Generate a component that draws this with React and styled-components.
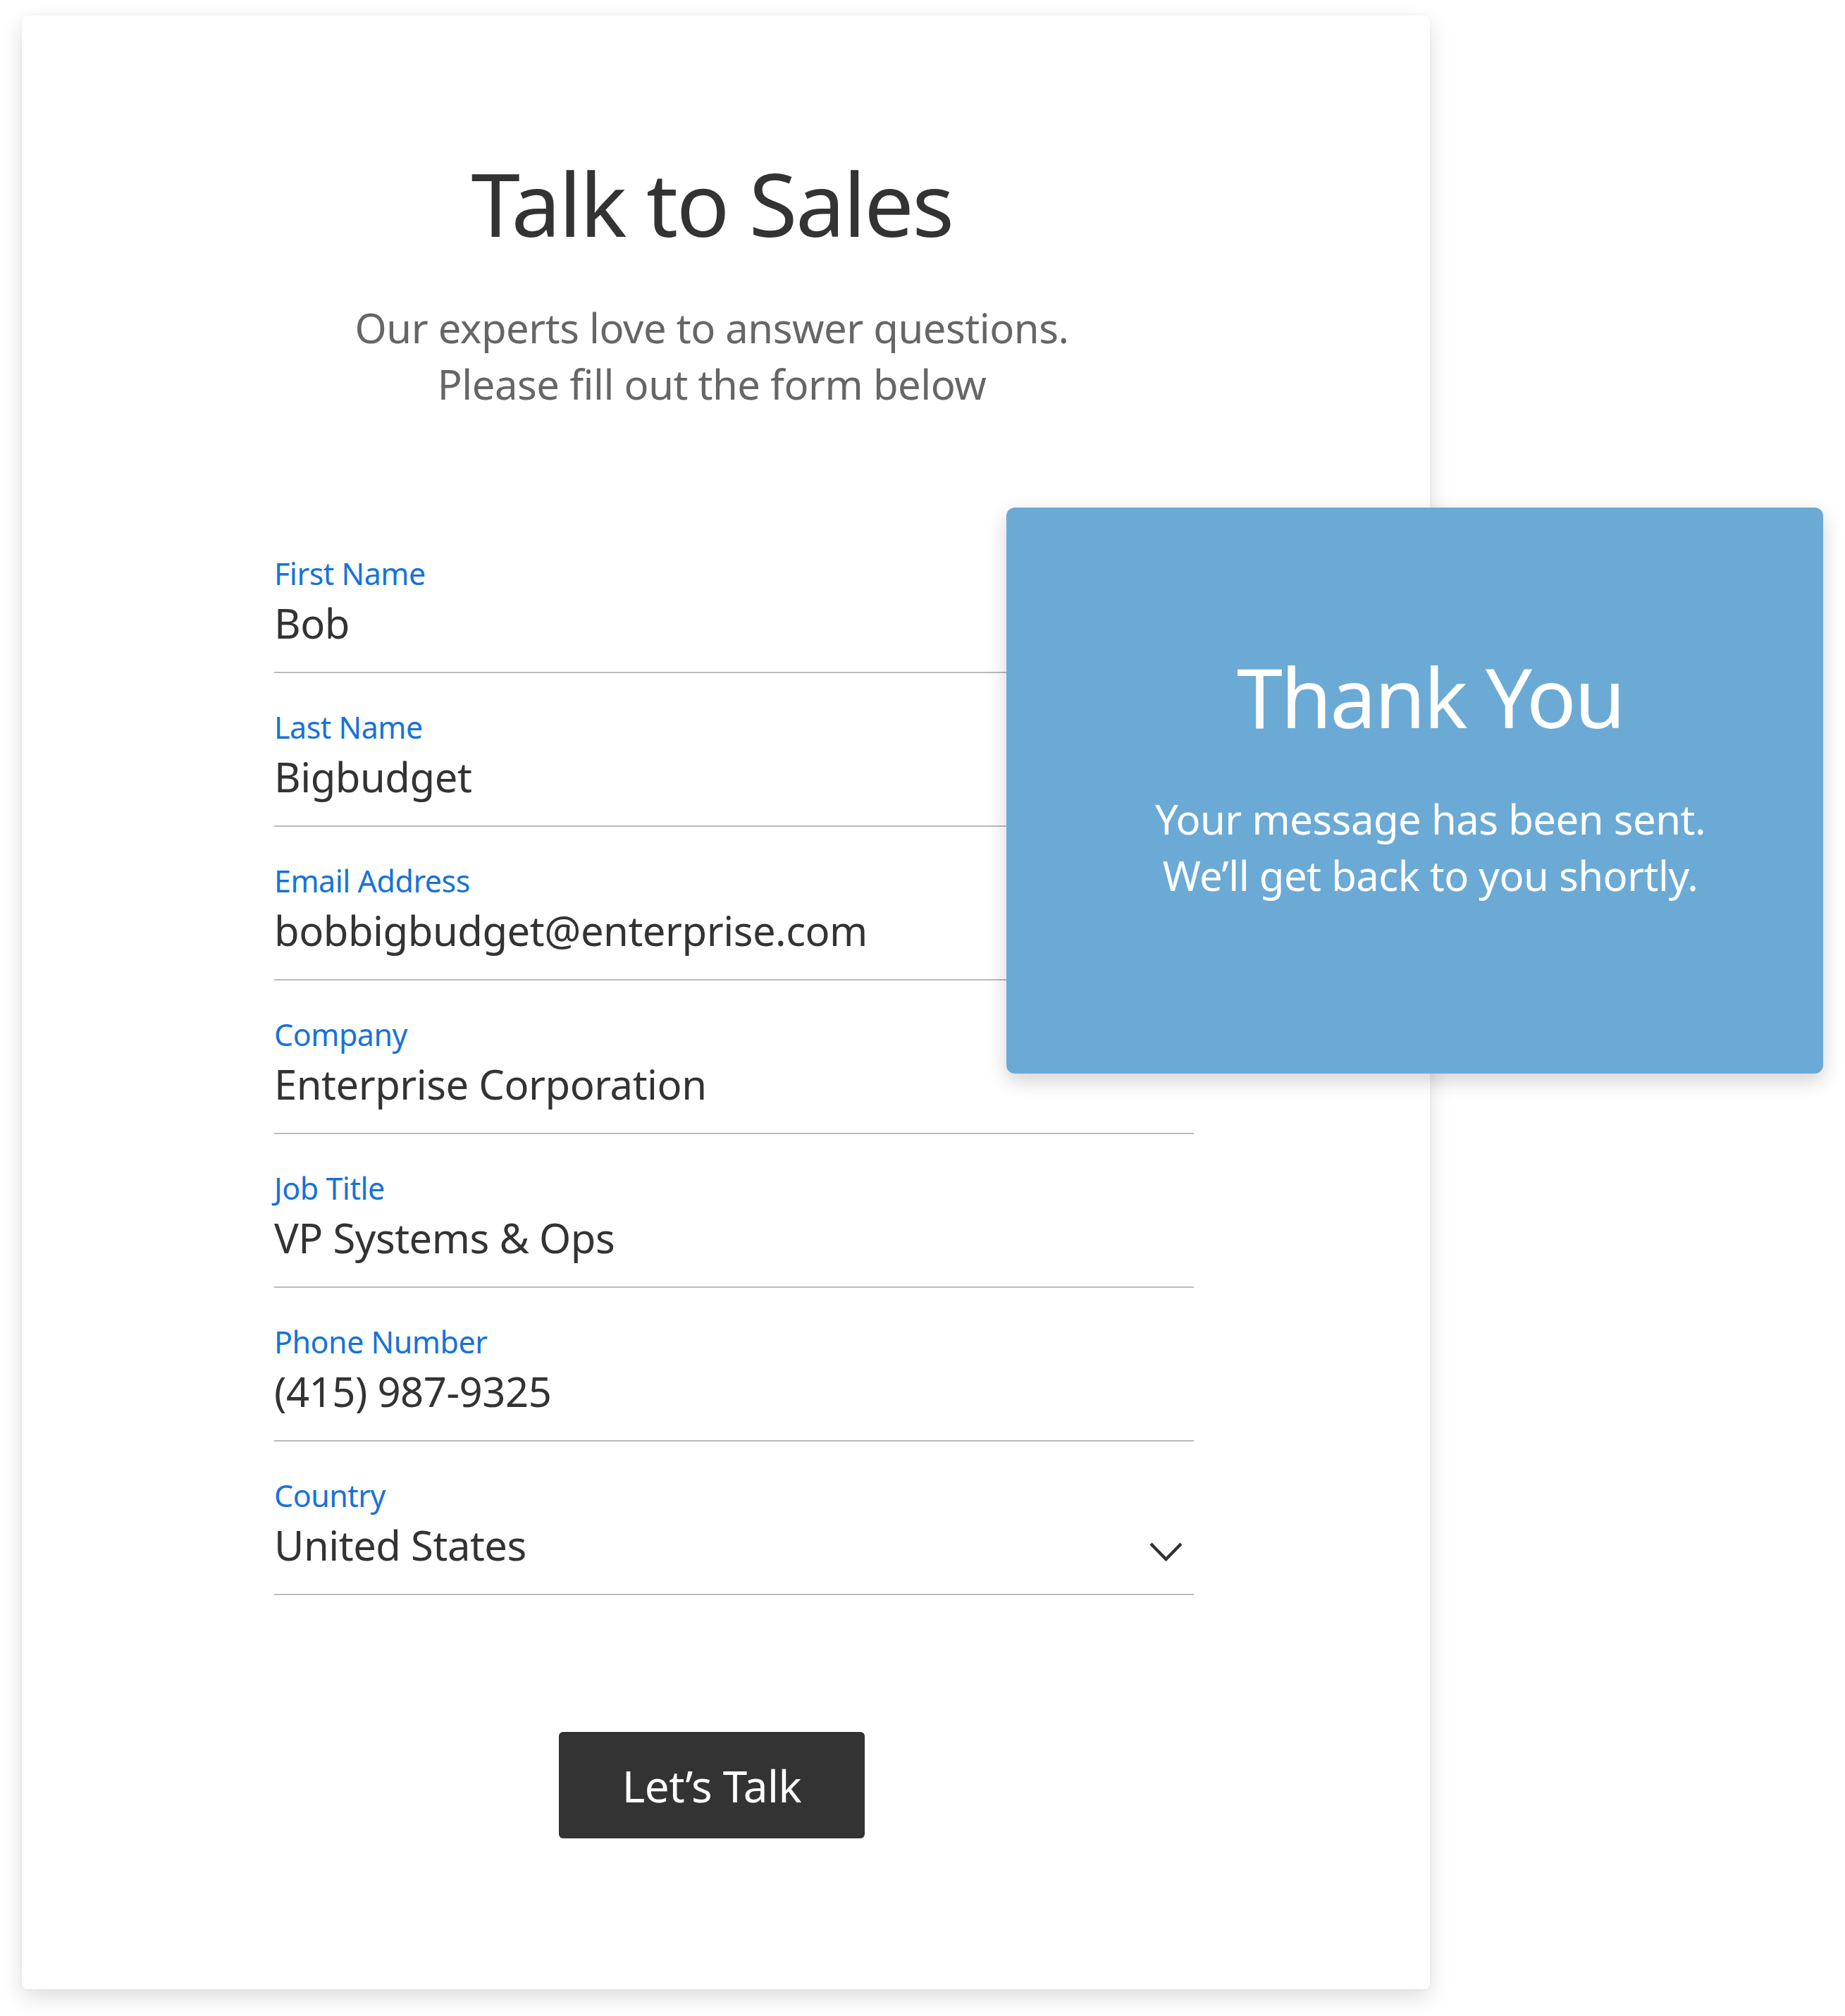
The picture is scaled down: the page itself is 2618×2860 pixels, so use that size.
import React from "react";
import styled, { createGlobalStyle } from "styled-components";

const GlobalStyle = createGlobalStyle`
  html, body {
    margin: 0;
    padding: 0;
    background: #ffffff;
  }
  body {
    font-family: "Noto Sans", "Open Sans", sans-serif;
    -webkit-font-smoothing: antialiased;
  }
`;

const Page = styled.div`
  position: relative;
  width: 2618px;
  height: 2860px;
  padding: 22px 0 0 31px;
  box-sizing: border-box;
`;

const Card = styled.div`
  width: 1998px;
  height: 2800px;
  box-sizing: border-box;
  background: #ffffff;
  border-radius: 8px;
  box-shadow: 0 12px 32px rgba(0, 0, 0, 0.13), 0 0 6px rgba(0, 0, 0, 0.04);
  padding-top: 191px;
  display: flex;
  flex-direction: column;
`;

const Header = styled.header`
  padding-right: 40px;
  text-align: center;
`;

const Title = styled.h1`
  margin: 0;
  font-size: 125px;
  line-height: 150px;
  font-weight: 400;
  color: #333333;
  letter-spacing: -2.5px;
`;

const Subtitle = styled.p`
  margin: 62px 0 0;
  font-size: 58px;
  line-height: 80px;
  color: #666666;
  letter-spacing: -0.5px;
`;

const Form = styled.form`
  margin: 152px 0 0 358px;
  width: 1305px;
  display: flex;
  flex-direction: column;
`;

const Field = styled.div`
  padding-top: 49px;
  padding-bottom: 33px;
  border-bottom: 2px solid #bbbbbb;
`;

const Label = styled.div`
  font-size: 43px;
  line-height: 56px;
  color: #1673d8;
  letter-spacing: -0.5px;
`;

const ValueRow = styled.div`
  margin-top: 6px;
  display: flex;
  align-items: flex-end;
  justify-content: space-between;
`;

const Value = styled.div`
  font-size: 58px;
  line-height: 72px;
  color: #333333;
  letter-spacing: -0.5px;
`;

const Chevron = styled.svg`
  display: block;
  margin: 0 15px 11px 0;
  color: #333333;
`;

const ButtonRow = styled.div`
  padding-right: 40px;
  margin-top: 194px;
  display: flex;
  justify-content: center;
`;

const Button = styled.button`
  width: 434px;
  height: 151px;
  border: none;
  border-radius: 6px;
  background: #333333;
  color: #ffffff;
  font-family: "Noto Sans", "Open Sans", sans-serif;
  font-size: 62px;
  line-height: 1;
  letter-spacing: -0.5px;
  display: flex;
  align-items: center;
  justify-content: center;
  padding: 0;
  cursor: pointer;
`;

const ThankPanel = styled.section`
  position: absolute;
  left: 1428px;
  top: 720px;
  width: 1159px;
  height: 803px;
  box-sizing: border-box;
  padding: 198px 0 0 44px;
  background: #6caad6;
  border-radius: 12px;
  box-shadow: 0 10px 28px rgba(0, 0, 0, 0.18);
  text-align: center;
  color: #ffffff;
`;

const ThankTitle = styled.h2`
  margin: 0;
  font-size: 117px;
  line-height: 140px;
  font-weight: 400;
  letter-spacing: -2.5px;
`;

const ThankText = styled.p`
  margin: 64px 0 0;
  font-size: 58px;
  line-height: 80px;
  letter-spacing: -0.5px;
`;

const fields = [
  { label: "First Name", value: "Bob" },
  { label: "Last Name", value: "Bigbudget" },
  { label: "Email Address", value: "bobbigbudget@enterprise.com" },
  { label: "Company", value: "Enterprise Corporation" },
  { label: "Job Title", value: "VP Systems & Ops" },
  { label: "Phone Number", value: "(415) 987-9325" },
  { label: "Country", value: "United States", select: true },
];

export default function App() {
  return (
    <>
      <GlobalStyle />
      <Page>
        <Card>
          <Header>
            <Title>Talk to Sales</Title>
            <Subtitle>
              Our experts love to answer questions.
              <br />
              Please fill out the form below
            </Subtitle>
          </Header>
          <Form onSubmit={(e) => e.preventDefault()}>
            {fields.map((f) => (
              <Field key={f.label}>
                <Label>{f.label}</Label>
                <ValueRow>
                  <Value>{f.value}</Value>
                  {f.select && (
                    <Chevron width="49" height="30" viewBox="0 0 49 30" aria-hidden="true">
                      <polyline
                        points="3,3 24.5,25 46,3"
                        fill="none"
                        stroke="currentColor"
                        strokeWidth="4.5"
                      />
                    </Chevron>
                  )}
                </ValueRow>
              </Field>
            ))}
          </Form>
          <ButtonRow>
            <Button type="submit">Let’s Talk</Button>
          </ButtonRow>
        </Card>
        <ThankPanel>
          <ThankTitle>Thank You</ThankTitle>
          <ThankText>
            Your message has been sent.
            <br />
            We’ll get back to you shortly.
          </ThankText>
        </ThankPanel>
      </Page>
    </>
  );
}
